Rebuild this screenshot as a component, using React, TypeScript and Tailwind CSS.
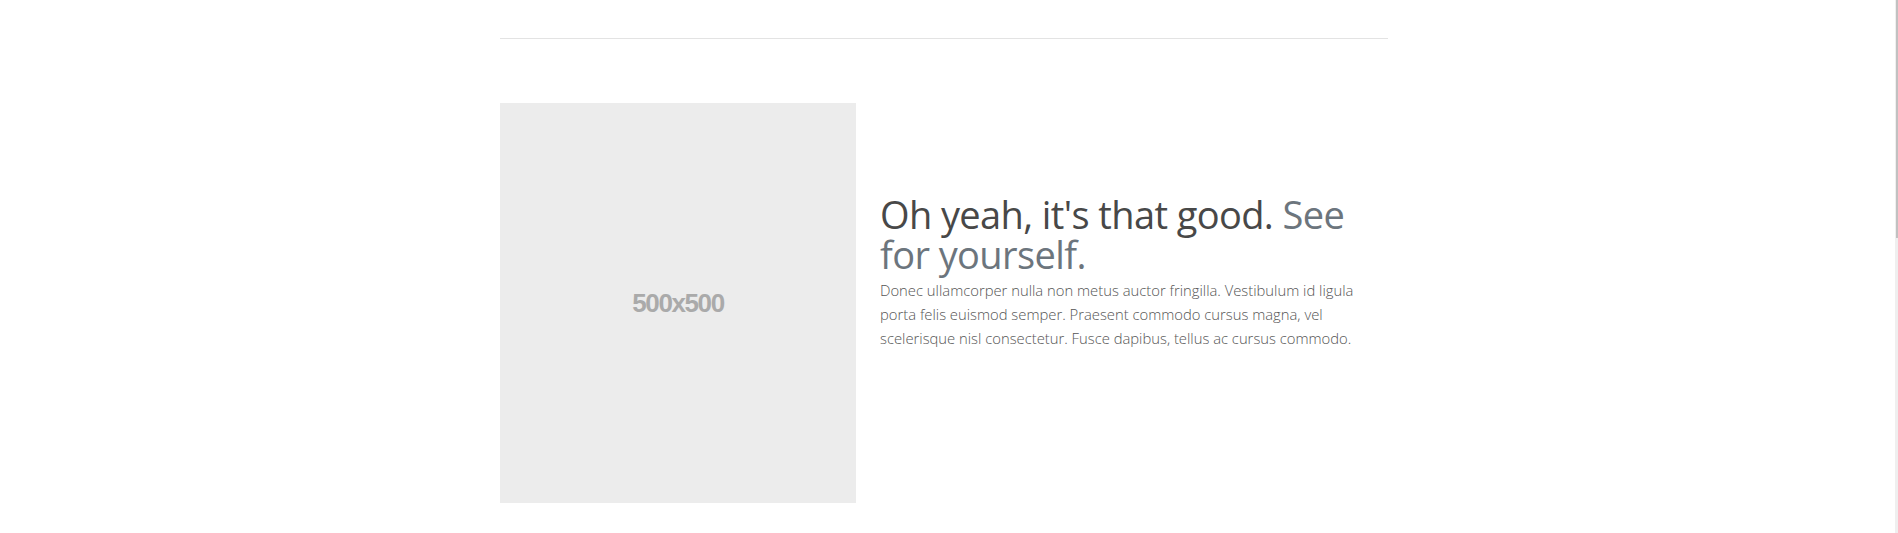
export default function App() {
  return (
    <div className="flex h-[533px] w-full overflow-hidden bg-white font-['Open_Sans',sans-serif]">
      <main className="flex-1 pr-[7px]">
        <div className="mx-auto w-[888px] pt-[38px]">
          <hr className="border-0 border-t border-[#e3e3e3]" />

          {/* featurette */}
          <div className="mt-16 flex items-center gap-6">
            <div className="flex h-[400px] w-[356px] shrink-0 items-center justify-center bg-[#ececec]">
              <span className="font-['Liberation_Sans',Arial,sans-serif] text-[26px] font-bold tracking-[-1.4px] text-[#aaaaaa]">
                500x500
              </span>
            </div>
            <div className="flex-1 pb-[62px]">
              <h2 className="text-[38px] leading-[40px] tracking-[-0.6px] text-[#484848]">
                Oh yeah, it's that good. <span className="text-[#6c757d]">See for yourself.</span>
              </h2>
              <p className="mt-1 max-w-[490px] text-[14.8px] font-light leading-[24px] text-[#555]">
                Donec ullamcorper nulla non metus auctor fringilla. Vestibulum id ligula porta felis euismod
                semper. Praesent commodo cursus magna, vel scelerisque nisl consectetur. Fusce dapibus, tellus
                ac cursus commodo.
              </p>
            </div>
          </div>
        </div>
      </main>

      {/* scrollbar */}
      <div className="flex w-[3px] flex-col bg-[#efefef]">
        <div className="ml-px h-[238px] bg-[#c1c1c1]" />
      </div>
    </div>
  );
}
